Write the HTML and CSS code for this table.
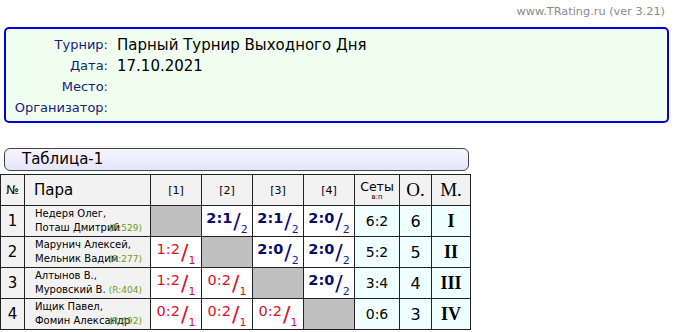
FILE: index.html
```html
<!DOCTYPE html>
<html lang="ru">
<head>
<meta charset="utf-8">
<link rel="stylesheet" href="styles.css">
</head>
<body>
<div class="site">www.TRating.ru (ver 3.21)</div>
<div class="info">
  <div class="lbl">Турнир:</div><div class="val">Парный Турнир Выходного Дня</div>
  <div class="lbl">Дата:</div><div class="val">17.10.2021</div>
  <div class="lbl">Место:</div><div class="val"></div>
  <div class="lbl">Организатор:</div><div class="val"></div>
</div>
<div class="caption">Таблица-1</div>
<table class="grid">
  <colgroup>
    <col class="c-n"><col class="c-p"><col class="c-s"><col class="c-s"><col class="c-s"><col class="c-s"><col class="c-sets"><col class="c-o"><col class="c-m">
  </colgroup>
  <tr class="head">
    <th class="num">№</th>
    <th class="pair">Пара</th>
    <th class="idx">[1]</th>
    <th class="idx">[2]</th>
    <th class="idx">[3]</th>
    <th class="idx">[4]</th>
    <th class="sets">Сеты<span class="sub">в:п</span></th>
    <th class="serif">О.</th>
    <th class="serif">М.</th>
  </tr>
  <tr>
    <td class="num">1</td>
    <td class="pair"><span class="nm">Недеря Олег,</span><span class="nm">Поташ Дмитрий</span><span class="r">(R:529)</span></td>
    <td class="x"></td>
    <td class="sc"><span class="score win"><span class="s">2:1</span><span class="sl">/</span><span class="d">2</span></span></td>
    <td class="sc"><span class="score win"><span class="s">2:1</span><span class="sl">/</span><span class="d">2</span></span></td>
    <td class="sc"><span class="score win"><span class="s">2:0</span><span class="sl">/</span><span class="d">2</span></span></td>
    <td class="tot">6:2</td>
    <td class="pts">6</td>
    <td class="pl">I</td>
  </tr>
  <tr>
    <td class="num">2</td>
    <td class="pair"><span class="nm">Марунич Алексей,</span><span class="nm">Мельник Вадим</span><span class="r">(R:277)</span></td>
    <td class="sc"><span class="score loss"><span class="s">1:2</span><span class="sl">/</span><span class="d">1</span></span></td>
    <td class="x"></td>
    <td class="sc"><span class="score win"><span class="s">2:0</span><span class="sl">/</span><span class="d">2</span></span></td>
    <td class="sc"><span class="score win"><span class="s">2:0</span><span class="sl">/</span><span class="d">2</span></span></td>
    <td class="tot">5:2</td>
    <td class="pts">5</td>
    <td class="pl">II</td>
  </tr>
  <tr>
    <td class="num">3</td>
    <td class="pair"><span class="nm">Алтынов В.,</span><span class="nm">Муровский В.</span><span class="r">(R:404)</span></td>
    <td class="sc"><span class="score loss"><span class="s">1:2</span><span class="sl">/</span><span class="d">1</span></span></td>
    <td class="sc"><span class="score loss"><span class="s">0:2</span><span class="sl">/</span><span class="d">1</span></span></td>
    <td class="x"></td>
    <td class="sc"><span class="score win"><span class="s">2:0</span><span class="sl">/</span><span class="d">2</span></span></td>
    <td class="tot">3:4</td>
    <td class="pts">4</td>
    <td class="pl">III</td>
  </tr>
  <tr>
    <td class="num">4</td>
    <td class="pair"><span class="nm">Ищик Павел,</span><span class="nm">Фомин Александр</span><span class="r">(R:492)</span></td>
    <td class="sc"><span class="score loss"><span class="s">0:2</span><span class="sl">/</span><span class="d">1</span></span></td>
    <td class="sc"><span class="score loss"><span class="s">0:2</span><span class="sl">/</span><span class="d">1</span></span></td>
    <td class="sc"><span class="score loss"><span class="s">0:2</span><span class="sl">/</span><span class="d">1</span></span></td>
    <td class="x"></td>
    <td class="tot">0:6</td>
    <td class="pts">3</td>
    <td class="pl">IV</td>
  </tr>
</table>
</body>
</html>
```
FILE: styles.css
```css
* { box-sizing: border-box; }
body {
  margin: 0;
  background: #fff;
  font-family: "DejaVu Sans", Verdana, sans-serif;
  color: #000;
}
.site {
  text-align: right;
  padding: 5px 10px 0 0;
  height: 27px;
  font-size: 11.3px;
  color: #8a8a8a;
}
.info {
  margin: 0 6px 0 4px;
  height: 96px;
  border: 2px solid #0000e6;
  border-radius: 5px;
  background: #f0fff0;
  display: grid;
  grid-template-columns: 102px 1fr;
  grid-auto-rows: 21px;
  column-gap: 9px;
  padding-top: 5px;
  align-items: center;
}
.lbl {
  text-align: right;
  font-size: 13px;
  color: #1a1a7a;
}
.val {
  font-size: 15px;
  color: #000;
}
.caption {
  margin: 25px 0 0 4px;
  width: 465px;
  height: 23px;
  border: 1px solid #444;
  border-radius: 6px;
  background: linear-gradient(to bottom, #f6f6ff, #e4e4fb);
  font-size: 15px;
  line-height: 21px;
  padding-left: 17px;
}
.grid {
  margin-top: 3px;
  border-collapse: collapse;
  table-layout: fixed;
  width: 471px;
}
.c-n { width: 24px; }
.c-p { width: 126px; }
.c-s { width: 51px; }
.c-sets { width: 45px; }
.c-o { width: 32px; }
.c-m { width: 39px; }
.grid td, .grid th {
  border: 1px solid #222;
  height: 31px;
  padding: 0;
  text-align: center;
  vertical-align: middle;
  font-weight: normal;
}
.head th { background: #f2f2f2; }
.head .num { font-size: 12px; }
.head .pair { font-size: 15px; text-align: left; padding-left: 9px; }
.head .idx { font-size: 11px; }
.head .sets { font-size: 12.5px; line-height: 13px; }
.head .sets .sub { display: block; font-size: 7px; line-height: 8px; }
.head .serif { font-family: "Liberation Serif", "Times New Roman", serif; font-size: 19px; }
td.num { background: #f2f2f2; font-size: 15px; }
td.pair {
  position: relative;
  background: #f2f2f2;
  text-align: left;
  padding-left: 10px;
  font-size: 10px;
  line-height: 14px;
  white-space: nowrap;
  overflow: hidden;
}
.nm { display: block; }
.r {
  position: absolute;
  right: 8px;
  bottom: 2px;
  color: #6c9a22;
  font-size: 9px;
  line-height: 12px;
}
td.x { background: #c0c0c0; }
td.sc { background: #fff; white-space: nowrap; }
.score {
  display: inline-flex;
  height: 25px;
  margin-top: 2px;
  vertical-align: middle;
  line-height: 1;
}
.score .s { align-self: flex-start; font-size: 14.5px; padding-top: 1px; }
.score .sl { align-self: center; font-size: 22px; margin-left: 1px; font-weight: normal; }
.score .d { align-self: flex-end; font-size: 11px; font-weight: normal; }
.win { color: #0a0a6e; }
.win .s { font-weight: bold; }
.win .d { color: #1a1aa0; }
.loss { color: #e0102a; }
td.tot, td.pts, td.pl { background: #f0ffff; }
td.tot { font-size: 14px; }
td.pts { font-size: 16px; }
td.pl { font-family: "Liberation Serif", "Times New Roman", serif; font-weight: bold; font-size: 18px; }
```
